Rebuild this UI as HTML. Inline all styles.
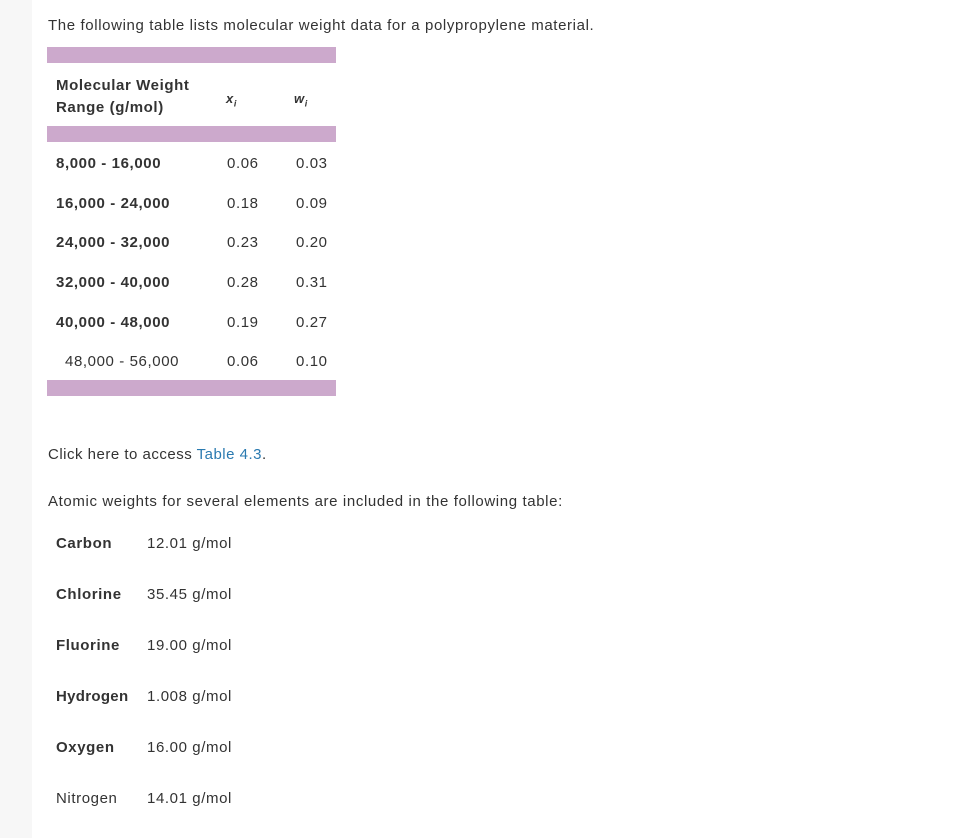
<!DOCTYPE html>
<html><head><meta charset="utf-8"><style>
body{margin:0;width:954px;height:838px;background:#fff;font-family:"Liberation Sans",sans-serif;color:#333;font-size:15px;letter-spacing:0.6px;position:relative;overflow:hidden}
.side{position:absolute;left:0;top:0;width:32px;height:838px;background:#f7f7f7}
.t{position:absolute;white-space:nowrap;line-height:16px;margin-top:1px}
.b{font-weight:bold}
.bar{position:absolute;left:47px;width:289px;height:16px;background:#cca9cc}
a{color:#2a7ab0;text-decoration:none}
</style></head><body>
<div class="side"></div>
<div class="t" style="left:48px;top:17px;letter-spacing:0.62px">The following table lists molecular weight data for a polypropylene material.</div>
<div class="bar" style="top:47px"></div>
<div class="t b" style="left:56px;top:77px">Molecular Weight</div>
<div class="t b" style="left:56px;top:99px">Range (g/mol)</div>
<div class="t b" style="left:226px;top:90px;font-style:italic;font-size:13px">x<sub style="font-size:9px">i</sub></div>
<div class="t b" style="left:294px;top:90px;font-style:italic;font-size:13px">w<sub style="font-size:9px">i</sub></div>
<div class="bar" style="top:126px"></div>
<div class="t b" style="left:56px;top:155px">8,000 - 16,000</div><div class="t" style="left:227px;top:155px">0.06</div><div class="t" style="left:296px;top:155px">0.03</div>
<div class="t b" style="left:56px;top:195px">16,000 - 24,000</div><div class="t" style="left:227px;top:195px">0.18</div><div class="t" style="left:296px;top:195px">0.09</div>
<div class="t b" style="left:56px;top:234px">24,000 - 32,000</div><div class="t" style="left:227px;top:234px">0.23</div><div class="t" style="left:296px;top:234px">0.20</div>
<div class="t b" style="left:56px;top:274px">32,000 - 40,000</div><div class="t" style="left:227px;top:274px">0.28</div><div class="t" style="left:296px;top:274px">0.31</div>
<div class="t b" style="left:56px;top:314px">40,000 - 48,000</div><div class="t" style="left:227px;top:314px">0.19</div><div class="t" style="left:296px;top:314px">0.27</div>
<div class="t" style="left:65px;top:353px">48,000 - 56,000</div><div class="t" style="left:227px;top:353px">0.06</div><div class="t" style="left:296px;top:353px">0.10</div>
<div class="bar" style="top:380px"></div>
<div class="t" style="left:48px;top:446px;letter-spacing:0.5px">Click here to access <a>Table 4.3</a>.</div>
<div class="t" style="left:48px;top:493px;letter-spacing:0.62px">Atomic weights for several elements are included in the following table:</div>
<div class="t b" style="left:56px;top:535px">Carbon</div><div class="t" style="left:147px;top:535px">12.01 g/mol</div>
<div class="t b" style="left:56px;top:586px">Chlorine</div><div class="t" style="left:147px;top:586px">35.45 g/mol</div>
<div class="t b" style="left:56px;top:637px">Fluorine</div><div class="t" style="left:147px;top:637px">19.00 g/mol</div>
<div class="t b" style="left:56px;top:688px;letter-spacing:0.3px">Hydrogen</div><div class="t" style="left:147px;top:688px">1.008 g/mol</div>
<div class="t b" style="left:56px;top:739px">Oxygen</div><div class="t" style="left:147px;top:739px">16.00 g/mol</div>
<div class="t" style="left:56px;top:790px">Nitrogen</div><div class="t" style="left:147px;top:790px">14.01 g/mol</div>
</body></html>
